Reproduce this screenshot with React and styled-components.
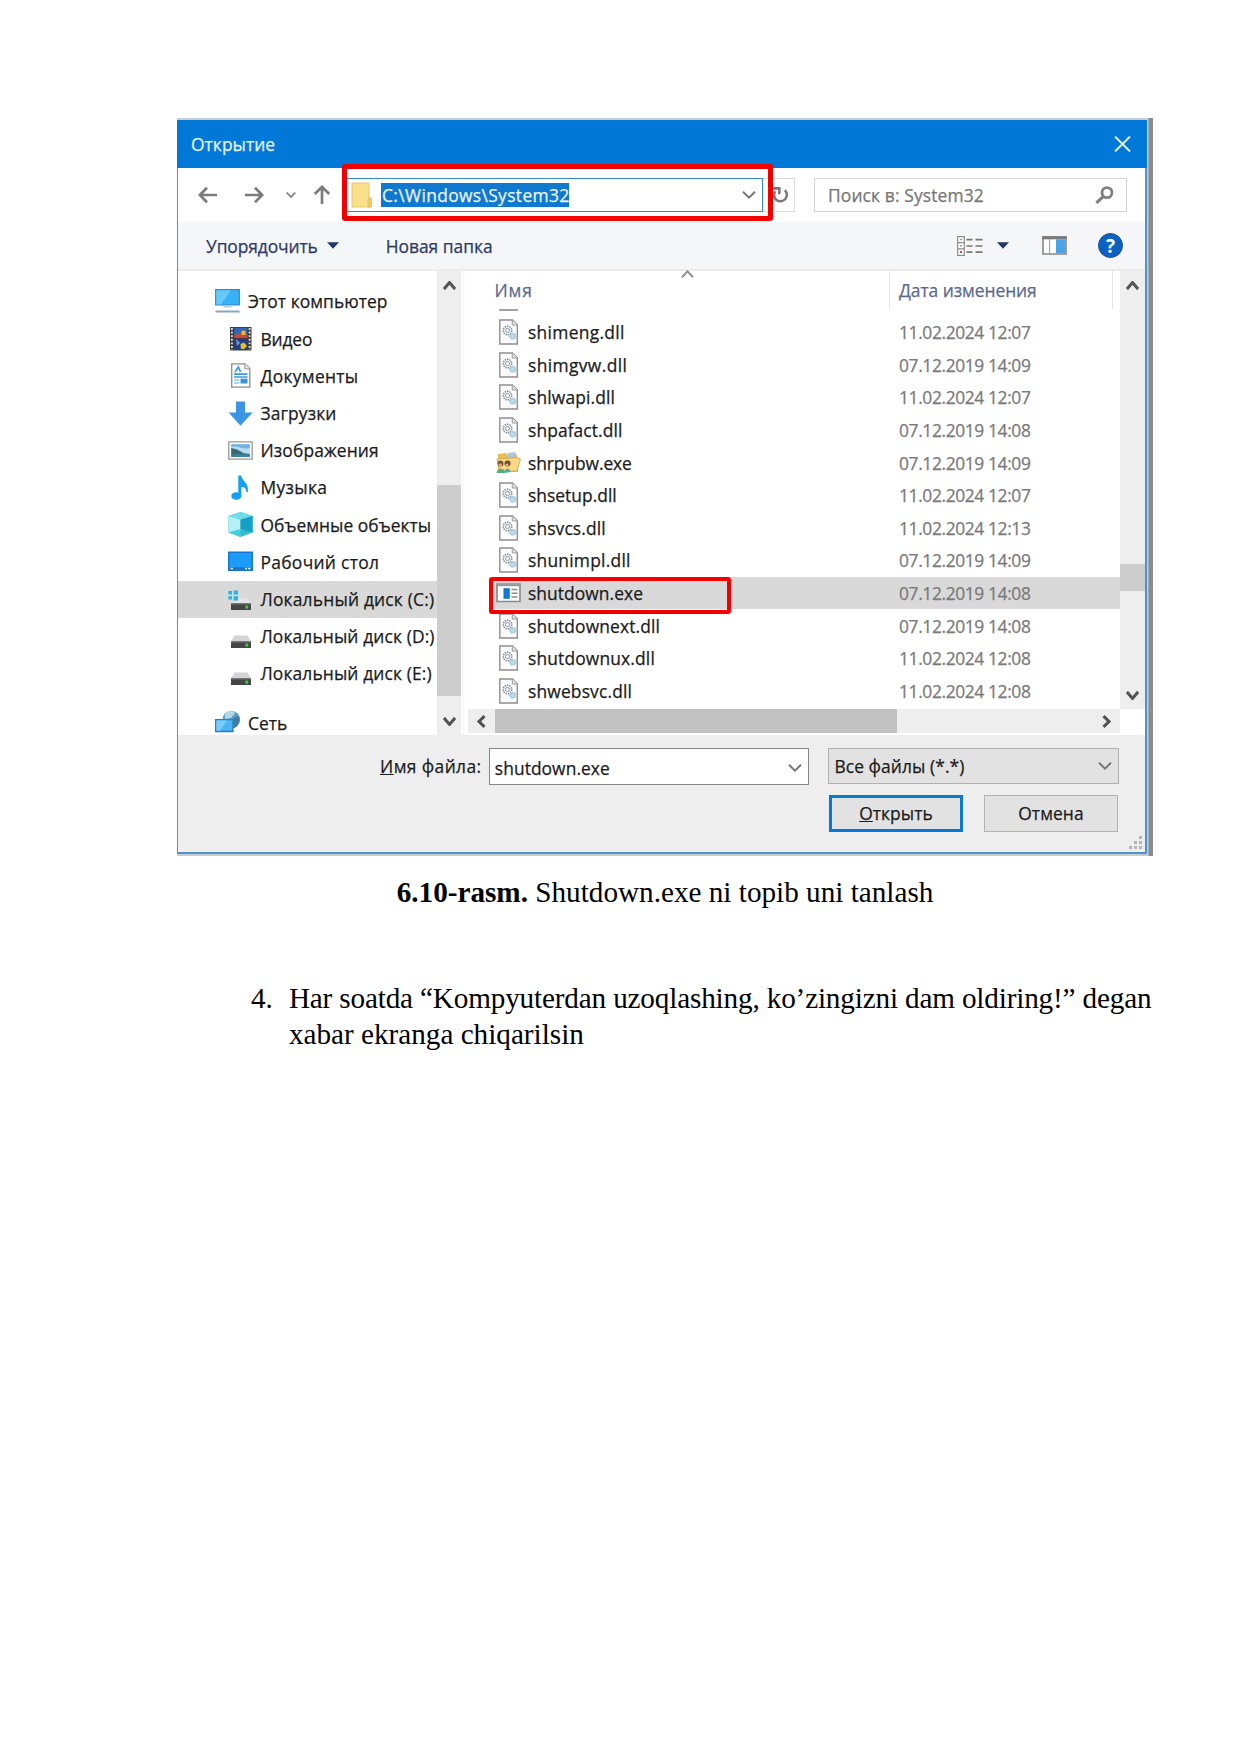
import React from "react";
import styled, { createGlobalStyle, css } from "styled-components";

const GlobalStyle = createGlobalStyle`
  *, *::before, *::after { box-sizing: border-box; }
  body { margin: 0; background: #fff; }
  svg { display: block; flex: none; }
`;

const ui = css`
  font-family: "Open Sans", "Noto Sans", sans-serif;
  font-size: 17.4px;
  line-height: 24px;
  white-space: pre;
  -webkit-text-stroke: 0.25px currentColor;
`;

const Page = styled.main`
  width: 1241px;
  height: 1755px;
  padding: 118px 0 0 177px;
  background: #fff;
`;

const Backdrop = styled.div`
  width: 976px;
  height: 738px;
  padding: 2px 6px 2px 0;
  background: linear-gradient(90deg, #c9cdd1 0, #c9cdd1 971px, #8b8b8b 972px, #8b8b8b 100%);
`;

const Dialog = styled.section`
  position: relative;
  width: 970px;
  height: 734px;
  display: flex;
  flex-direction: column;
  border: solid #4a95cf;
  border-width: 0 2px 2px 1px;
  background: #fff;
`;

const Label = styled.span`
  ${ui}
  color: ${(p) => p.$color || "#1b1b1b"};
  letter-spacing: ${(p) => p.$ls ?? 0.15}px;
`;

const TitleBar = styled.header`
  height: 48px;
  flex: none;
  display: flex;
  align-items: center;
  justify-content: space-between;
  margin: 0 -2px 0 -1px;
  padding: 0 16px 1px 14px;
  background: #0078d7;
`;

const AddressBar = styled.div`
  height: 54px;
  flex: none;
  display: flex;
  align-items: center;
  padding-left: 20px;
`;

const NavButtons = styled.div`
  width: 147px;
  display: flex;
  align-items: center;
`;

const PathField = styled.div`
  width: 418px;
  height: 34px;
  display: flex;
  align-items: center;
  padding: 0 6px 0 5px;
  border: 1.5px solid #3488cc;
  background: #fff;
`;

const Selection = styled.div`
  height: 24px;
  margin: 0 auto 0 9px;
  padding-left: 1px;
  background: #0f78cf;
  display: flex;
  align-items: center;
  width: 188px;
`;

const RefreshBox = styled.div`
  width: 32px;
  height: 34px;
  display: flex;
  align-items: center;
  padding-left: 9px;
  border: 1px solid #d9d9d9;
  border-left: 0;
`;

const SearchField = styled.div`
  width: 313px;
  height: 34px;
  margin-left: 19px;
  display: flex;
  align-items: center;
  justify-content: space-between;
  padding: 0 12px 1px 13px;
  border: 1.5px solid #d4d4d4;
`;

const Toolbar = styled.div`
  height: 49px;
  flex: none;
  display: flex;
  align-items: center;
  padding: 0 22px 0 28px;
  background: #f5f6f7;
  border-bottom: 2px solid #ebebec;
`;

const ToolButton = styled.div`
  display: flex;
  align-items: center;
  gap: ${(p) => p.$gap || 0}px;
  margin-left: ${(p) => p.$ml || 0}px;
`;

const Spacer = styled.div`
  flex: 1;
`;

const Body = styled.div`
  height: 464px;
  flex: none;
  display: flex;
`;

const Tree = styled.nav`
  width: 259px;
  flex: none;
  padding-top: 12.4px;
  overflow: hidden;
`;

const TreeRow = styled.div`
  height: 37.2px;
  display: flex;
  align-items: center;
  padding-left: ${(p) => (p.$root ? 37 : 50)}px;
  padding-bottom: 1px;
  gap: ${(p) => (p.$root ? 8 : 7.5)}px;
  margin-top: ${(p) => p.$mt || 0}px;
  background: ${(p) => (p.$active ? "#d9d9d9" : "transparent")};
`;

const VScroll = styled.div`
  width: ${(p) => p.$w}px;
  height: ${(p) => p.$h}px;
  flex: none;
  display: flex;
  flex-direction: column;
  align-items: stretch;
  background: #eee;
`;

const ScrollEnd = styled.div`
  height: ${(p) => p.$h}px;
  display: flex;
  justify-content: center;
  padding-top: ${(p) => p.$pt}px;
`;

const Thumb = styled.div`
  height: ${(p) => p.$h}px;
  background: #cdcdcd;
`;

const Splitter = styled.div`
  width: 7px;
  flex: none;
  background: linear-gradient(90deg, #fff 0 1px, #f6f6f6 2px, #fff 4px);
`;

const Files = styled.div`
  width: 652px;
  flex: none;
  display: flex;
  flex-direction: column;
`;

const ListHead = styled.div`
  height: 38px;
  flex: none;
  display: flex;
  padding-left: 26.5px;
`;

const HeadCell = styled.div`
  width: ${(p) => p.$w}px;
  display: flex;
  justify-content: space-between;
  padding: ${(p) => p.$pad};
  border-right: 1px solid #e3e3e3;
`;

const SortMark = styled.div`
  margin-top: -8px;
`;

const ClippedRow = styled.div`
  height: 7px;
  flex: none;
  padding: 0 0 0 31px;
  &::before {
    content: "";
    display: block;
    width: 19px;
    height: 2px;
    background: #a2a2a2;
  }
`;

const FileRow = styled.div`
  position: relative;
  height: 32.6px;
  flex: none;
  display: flex;
  align-items: center;
  margin-left: 23px;
  padding-left: 5px;
  background: ${(p) => (p.$active ? "#d9d9d9" : "transparent")};
`;

const FileName = styled.div`
  width: 403px;
  display: flex;
  align-items: center;
  gap: 7px;
`;

const HScroll = styled.div`
  height: 24px;
  flex: none;
  margin-top: auto;
  margin-bottom: 2px;
  display: flex;
  align-items: center;
  justify-content: space-between;
  padding: 0 8px;
  background: #eee;
`;

const HThumb = styled.div`
  width: 402px;
  height: 24px;
  margin: 0 auto 0 8.5px;
  background: #c1c1c1;
`;

const Highlight = styled.div`
  position: absolute;
  left: ${(p) => p.$x}px;
  top: ${(p) => p.$y}px;
  width: ${(p) => p.$w}px;
  height: ${(p) => p.$h}px;
  border: ${(p) => p.$b}px solid #f00000;
  border-radius: 3px;
  z-index: 2;
`;

const Footer = styled.footer`
  flex: 1;
  display: flex;
  flex-direction: column;
  gap: 10px;
  padding: 13px 26px 0 202px;
  background: #eee;
`;

const FooterRow = styled.div`
  display: flex;
  height: 37px;
  justify-content: ${(p) => (p.$end ? "flex-end" : "flex-start")};
`;

const FieldLabel = styled.div`
  width: 109px;
  padding-top: 6px;
`;

const NameInput = styled.div`
  width: 321px;
  height: 37px;
  display: flex;
  align-items: center;
  justify-content: space-between;
  padding: 3px 6px 0 5px;
  border: 1.5px solid #858585;
  background: #fff;
`;

const TypeSelect = styled.div`
  width: 291px;
  height: 36px;
  margin-left: 19px;
  display: flex;
  align-items: center;
  justify-content: space-between;
  padding: 0 6px 0 5px;
  border: 1.5px solid #b0b0b0;
  background: #e2e2e2;
`;

const Button = styled.button`
  width: 134px;
  height: 37px;
  margin: 0 1px 0 20px;
  padding: 0 0 2px;
  border: ${(p) => (p.$primary ? "3px solid #0a78d2" : "1.5px solid #b2b2b2")};
  background: #e2e2e2;
`;

const Grip = styled.div`
  position: absolute;
  right: 3px;
  bottom: 3px;
`;

const Caption = styled.p`
  width: 976px;
  margin: 18px 0 0;
  text-align: center;
  font: 29.2px/36px "Liberation Serif", serif;
  color: #000;
`;

const Steps = styled.div`
  display: flex;
  margin: 70px 0 0 74px;
  gap: 16px;
  font: 29.2px/36px "Liberation Serif", serif;
  color: #000;
`;

const StepText = styled.div`
  display: flex;
  flex-direction: column;
  white-space: pre;
`;

const StepLine = styled.span`
  letter-spacing: ${(p) => p.$ls}px;
`;

const Chevron = ({ w = 14, h = 8, color = "#777", sw = 2, up }) => (
  <svg width={w} height={h} viewBox="0 0 14 8" fill="none" stroke={color} strokeWidth={sw} preserveAspectRatio="none">
    <path d={up ? "M1 7.2L7 1.4L13 7.2" : "M1 .8L7 6.6L13 .8"} />
  </svg>
);

const SideChevron = ({ left }) => (
  <svg width="10" height="13" viewBox="0 0 10 13" fill="none" stroke="#505050" strokeWidth="3">
    <path d={left ? "M8.5 1.2L3 6.5L8.5 11.8" : "M1.5 1.2L7 6.5L1.5 11.8"} />
  </svg>
);

const Triangle = () => (
  <svg width="12" height="7" viewBox="0 0 12 7"><path d="M0 .3H12L6 6.8z" fill="#1f3864" /></svg>
);

const ArrowIcon = ({ dir }) => {
  const turn = { left: 0, up: 90, right: 180 }[dir];
  return (
    <svg width="20" height="20" viewBox="0 0 20 20" fill="none" stroke="#7b7b7b" strokeWidth="2.7">
      <path transform={`rotate(${turn} 10 10)`} d="M19 10H2M9 2.8L1.9 10L9 17.2" />
    </svg>
  );
};

const FolderIcon = () => (
  <svg width="21" height="26" viewBox="0 0 21 26">
    <path d="M1 1H18V15L20 17V25H1z" fill="#fbe08a" stroke="#e8c766" />
    <path d="M17 25V17L18.5 15L20.3 17V25z" fill="#f2cc63" stroke="#dcb65a" strokeWidth=".7" />
  </svg>
);

const RefreshIcon = () => (
  <svg width="17" height="18" viewBox="0 0 17 18" fill="none" stroke="#797979" strokeWidth="2.6">
    <path d="M12.8 4.2A6.4 6.4 0 1 1 3.2 5.2" />
    <path d="M1 2.4H7.3V8.2" />
  </svg>
);

const SearchIcon = () => (
  <svg width="19" height="18" viewBox="0 0 19 18" fill="none" stroke="#7f7f7f">
    <circle cx="12" cy="6.6" r="5" strokeWidth="2.8" />
    <path d="M8.4 10.3L1.4 17" strokeWidth="3.2" />
  </svg>
);

const CloseIcon = () => (
  <svg width="17" height="16" viewBox="0 0 17 16" stroke="#e8f3fc" strokeWidth="2"><path d="M1 .6L16 15.4M16 .6L1 15.4" /></svg>
);

const ViewIcon = () => (
  <svg width="26" height="20" viewBox="0 0 26 20" fill="none" stroke="#8c8c8c" strokeWidth="1.2">
    <path d="M.7 .7H7.3V19.3H.7zM.7 6.7H7.3M.7 12.8H7.3" fill="#fff" />
    <path d="M3 3.7H5M3 9.8H5" stroke="#7891ae" />
    <path d="M3 16H5" stroke="#d04a3a" strokeWidth="2" />
    <path d="M9.5 3.7H15.5M18.5 3.7H25.5M9.5 10H15.5M18.5 10H25.5M9.5 16.2H15.5M18.5 16.2H25.5" stroke="#777" strokeWidth="1.7" />
  </svg>
);

const PaneIcon = () => (
  <svg width="25" height="19" viewBox="0 0 25 19">
    <path d="M1 1H24V18H1z" fill="#fff" stroke="#858585" strokeWidth="1.6" />
    <path d="M.2 .2H24.8V3.3H.2z" fill="#7b7b7b" />
    <path d="M7.6 3V18" stroke="#999" />
    <path d="M14 3.3H23.2V17.2H14z" fill="#4aa3e6" />
  </svg>
);

const HelpBadge = styled.div`
  width: 25px;
  height: 25px;
  margin-left: 31px;
  border-radius: 50%;
  border: 1.5px solid #1c4f8c;
  background: #0b62c4;
  color: #fff;
  display: flex;
  align-items: center;
  justify-content: center;
  font: bold 19px/22px "Open Sans", sans-serif;
`;

const icons = {
  computer: (
    <>
      <path d="M.7 .7H24.3V16H.7z" fill="#35b2f8" stroke="#3a86b8" strokeWidth="1.2" />
      <path d="M1.3 1.3H16L6 15.4H1.3z" fill="#67c8fb" />
      <path d="M9.5 16.5H15.5L17 18.6H8z" fill="#b9cbd8" />
      <path d="M.5 22.5H24.5" stroke="#87a5bd" strokeWidth="2" />
    </>
  ),
  video: (
    <>
      <path d="M2 1H23.5V24.5H2z" fill="#3c3c3c" />
      <path d="M3.9 2V24M21.6 2V24" stroke="#dcdcdc" strokeWidth="1.9" strokeDasharray="1.9 1.7" />
      <path d="M6.2 1.8H19.4V12H6.2z" fill="#3565b8" />
      <path d="M6.2 13H19.4V23.8H6.2z" fill="#243f86" />
      <path d="M6.2 9L12 7L17 9.5L19.4 8.6V12H6.2z" fill="#bf4d3f" />
      <path d="M13.5 4.8H17.5V9H13.5zM12.5 18L16 16.6L19 20L16 23H13z" fill="#edbd2c" />
      <path d="M8 13L12 17L9 20z" fill="#6f99d8" />
    </>
  ),
  docs: (
    <>
      <path d="M3.7 .8H17L21.8 5.6V24.2H3.7z" fill="#fcfcfc" stroke="#8e8e8e" strokeWidth="1.3" />
      <path d="M16.8 .8V5.8H21.8" fill="#e6e6e6" stroke="#9a9a9a" />
      <path d="M7 9L10.4 4L12.5 9M6 11.2H19.5M6 14H19.5" fill="none" stroke="#3b9bdc" strokeWidth="1.7" />
      <path d="M6 17H11M6 20H11" stroke="#5ca9db" strokeWidth="1.2" />
      <path d="M12.5 15.7H19.5V20.5H12.5z" fill="#4191d0" />
    </>
  ),
  download: <path d="M8 .5H17V11.5H24.6L12.5 24.8L.6 11.5H8z" fill="#3a95e4" />,
  images: (
    <>
      <path d="M.8 3.8H24.2V21.2H.8z" fill="#fff" stroke="#999" strokeWidth="1.3" />
      <path d="M3.2 6.2H21.8V18.8H3.2z" fill="#b5dcf6" />
      <path d="M3.2 6.2H21.8V10C15 12 9 7 3.2 9z" fill="#6fb2e6" />
      <path d="M3.2 10L9 11.5L16 15.2L21.8 16V18.8H3.2z" fill="#3a6b70" />
      <path d="M3.2 16.5H21.8V18.8H3.2z" fill="#3882b0" />
    </>
  ),
  music: (
    <>
      <ellipse cx="8.3" cy="21" rx="5" ry="3.8" fill="#12a0f4" />
      <path d="M10.3 21V.5H13.3C13.8 6 21.5 8 19.8 17H18.3C18.5 13 16 12 13.3 12V21z" fill="#12a0f4" />
    </>
  ),
  cube: (
    <>
      <path d="M12.5 0L24.6 4V20.5L12.5 25L.5 20.5V4z" fill="#30bdd2" />
      <path d="M.5 4L12.5 0L24.6 4L12.5 7.8z" fill="#6fdcea" />
      <path d="M.5 4L12.5 7.8V18L.5 20.5z" fill="#b5f0f5" />
      <path d="M12.5 7.8L24.6 4V20.5L12.5 17z" fill="#14a0c4" />
      <path d="M.5 20.5L12.5 17V25z" fill="#45cfdc" />
    </>
  ),
  desktop: (
    <>
      <path d="M.7 3.2H24.3V21.3H.7z" fill="#1d9bfb" stroke="#1877c8" strokeWidth="1.4" />
      <path d="M1.4 18.3H23.6V20.6H1.4z" fill="#1673c5" />
      <path d="M2.5 19.5H5M17 19.5H19M20 19.5H22.5" stroke="#d4efff" strokeWidth="1.6" />
    </>
  ),
  disk: (
    <>
      <path d="M6.5 11.5H19.5L23 17.5H3z" fill="#d4d4d6" />
      <path d="M3 17H23V24H3z" fill="#454547" />
      <path d="M3 17H23V18.5H3z" fill="#77777a" />
      <path d="M17.4 19.6H20.2V22.6H17.4z" fill="#3bd13b" />
    </>
  ),
  system: (
    <>
      <path d="M8 12.5H20L23 17.5H3z" fill="#e2e4e6" />
      <path d="M3 17H23V24H3z" fill="#454547" />
      <path d="M3 17H23V18.5H3z" fill="#77777a" />
      <path d="M17.4 19.6H20.2V22.6H17.4z" fill="#3bd13b" />
      <path d="M.4 5H4V8.6H.4zM5.6 4.4H10V8.6H5.6zM.4 10.2H4V13.6H.4zM5.6 10.2H10V14.4H5.6z" fill="#25b4ea" />
    </>
  ),
  network: (
    <>
      <circle cx="16.3" cy="9.5" r="8.7" fill="#5c9fc4" />
      <path d="M10 4C13 .5 18 0 20 3L16 8L10 9z" fill="#b4d7e8" />
      <path d="M18 8L24 6C26 12 23 16 19 18z" fill="#3d7ba4" />
      <path d="M.7 9.7H18V21.5H.7z" fill="#4db5f5" stroke="#2e7db5" strokeWidth="1.3" />
      <path d="M1.4 10.4H12L5 20.8H1.4z" fill="#79cdfb" />
    </>
  ),
};

const TreeIcon = ({ name }) => (
  <svg width="25" height="25" viewBox="0 0 25 25">{icons[name]}</svg>
);

const DllIcon = () => (
  <svg width="25" height="26" viewBox="0 0 25 26">
    <path d="M3.8 1H16.5L21.3 5.8V25H3.8z" fill="#fbfbfb" stroke="#8f8f8f" strokeWidth="1.4" />
    <path d="M16.3 1V6H21.3" fill="#e5e5e5" stroke="#9c9c9c" />
    <circle cx="11.5" cy="11.5" r="4.3" fill="#eef1f4" stroke="#7f8b96" strokeWidth="1.5" strokeDasharray="1.5 .9" />
    <circle cx="11.5" cy="11.5" r="2" fill="#fff" stroke="#8c98a4" />
    <circle cx="16.8" cy="17.3" r="2.6" fill="#c0dcec" stroke="#a9cde0" strokeWidth="1.4" />
    <path d="M12.5 16L16.5 20.5" stroke="#b3d2e2" strokeWidth="1.6" />
  </svg>
);

const ShareIcon = () => (
  <svg width="25" height="24" viewBox="0 0 25 24">
    <path d="M2 3L10 2L12 4L20 2L22 7V21L2 21z" fill="#e9bf55" />
    <path d="M12 2L19 1V6H12z" fill="#a9c9dc" />
    <path d="M1 8L20 6.5L24.5 8L21 20L4 21z" fill="#f7da83" stroke="#cfa245" strokeWidth=".8" />
    <circle cx="4.5" cy="12.5" r="3" fill="#7c5638" />
    <circle cx="11.5" cy="12.5" r="3" fill="#6d4c38" />
    <circle cx="4.2" cy="14" r="1.6" fill="#e3b084" />
    <circle cx="11" cy="14" r="1.6" fill="#e3b084" />
    <path d="M.5 22C1 17 9 16 9 22z" fill="#4fb477" />
    <path d="M8 22C8.5 17 14 16 14.5 21z" fill="#47b3a2" />
  </svg>
);

const ExeIcon = () => (
  <svg width="25" height="20" viewBox="0 0 25 20">
    <path d="M1 1H24V18.5H1z" fill="#fbfbfb" stroke="#8d8d8d" strokeWidth="1.7" />
    <path d="M.5 1.2H24.5V3.2H.5z" fill="#9a9a9a" />
    <path d="M7.5 5.2H13.8V15.8H7.5z" fill="#0f78d4" />
    <path d="M15.5 6.5H21.5M15.5 10.2H21.5M15.5 14H21.5" stroke="#8e8e8e" strokeWidth="1.4" />
  </svg>
);

const tree = [
  { icon: "computer", text: "Этот компьютер", ls: 0.07, root: true },
  { icon: "video", text: "Видео", ls: -0.15 },
  { icon: "docs", text: "Документы", ls: 0.32 },
  { icon: "download", text: "Загрузки", ls: 0.1 },
  { icon: "images", text: "Изображения", ls: 0.12 },
  { icon: "music", text: "Музыка", ls: 0.34 },
  { icon: "cube", text: "Объемные объекты", ls: 0.04 },
  { icon: "desktop", text: "Рабочий стол", ls: 0.3 },
  { icon: "system", text: "Локальный диск (C:)", ls: 0.19, active: true },
  { icon: "disk", text: "Локальный диск (D:)", ls: 0.12 },
  { icon: "disk", text: "Локальный диск (E:)", ls: 0.12 },
  { icon: "network", text: "Сеть", ls: 0, root: true, mt: 12 },
];

const files = [
  { name: "shimeng.dll", date: "11.02.2024 12:07", ls: 0.3 },
  { name: "shimgvw.dll", date: "07.12.2019 14:09", ls: 0.38 },
  { name: "shlwapi.dll", date: "11.02.2024 12:07", ls: 0.15 },
  { name: "shpafact.dll", date: "07.12.2019 14:08", ls: 0.1 },
  { name: "shrpubw.exe", date: "07.12.2019 14:09", ls: -0.08, Icon: ShareIcon },
  { name: "shsetup.dll", date: "11.02.2024 12:07", ls: 0.02 },
  { name: "shsvcs.dll", date: "11.02.2024 12:13", ls: 0.12 },
  { name: "shunimpl.dll", date: "07.12.2019 14:09", ls: 0.24 },
  { name: "shutdown.exe", date: "07.12.2019 14:08", ls: 0.06, Icon: ExeIcon, active: true },
  { name: "shutdownext.dll", date: "07.12.2019 14:08", ls: 0.12 },
  { name: "shutdownux.dll", date: "11.02.2024 12:08", ls: 0.15 },
  { name: "shwebsvc.dll", date: "11.02.2024 12:08", ls: 0.16 },
];

const NavSlot = styled.div`
  width: ${(p) => p.$w}px;
`;

export default function App() {
  return (
    <Page>
      <GlobalStyle />
      <Backdrop>
        <Dialog>
          <TitleBar>
            <Label $color="#e6f2fc" $ls={0.06}>Открытие</Label>
            <CloseIcon />
          </TitleBar>

          <AddressBar>
            <NavButtons>
              <NavSlot $w={46}><ArrowIcon dir="left" /></NavSlot>
              <NavSlot $w={42}><ArrowIcon dir="right" /></NavSlot>
              <NavSlot $w={26}><Chevron w={10} h={6} sw={2.6} color="#8a8a8a" /></NavSlot>
              <ArrowIcon dir="up" />
            </NavButtons>
            <PathField>
              <FolderIcon />
              <Selection><Label $color="#e9f4fd" $ls={0.36}>C:\Windows\System32</Label></Selection>
              <Chevron color="#777" />
            </PathField>
            <RefreshBox><RefreshIcon /></RefreshBox>
            <SearchField>
              <Label $color="#767676" $ls={0.13}>Поиск в: System32</Label>
              <SearchIcon />
            </SearchField>
          </AddressBar>

          <Toolbar>
            <ToolButton $gap={9}>
              <Label $color="#2b3a66" $ls={-0.1}>Упорядочить</Label>
              <Triangle />
            </ToolButton>
            <ToolButton $ml={47}>
              <Label $color="#2b3a66" $ls={0}>Новая папка</Label>
            </ToolButton>
            <Spacer />
            <ToolButton $gap={14}>
              <ViewIcon />
              <Triangle />
            </ToolButton>
            <ToolButton $ml={33}><PaneIcon /></ToolButton>
            <HelpBadge>?</HelpBadge>
          </Toolbar>

          <Body>
            <Tree>
              {tree.map((n) => (
                <TreeRow key={n.text} $root={n.root} $active={n.active} $mt={n.mt}>
                  <TreeIcon name={n.icon} />
                  <Label $ls={n.ls}>{n.text}</Label>
                </TreeRow>
              ))}
            </Tree>
            <VScroll $w={24} $h={464}>
              <ScrollEnd $h={213.5} $pt={10}><Chevron up w={13} h={9} sw={3} color="#555" /></ScrollEnd>
              <Thumb $h={211} />
              <ScrollEnd $h={39} $pt={21}><Chevron w={13} h={9} sw={3} color="#555" /></ScrollEnd>
            </VScroll>
            <Splitter />

            <Files>
              <ListHead>
                <HeadCell $w={395.5} $pad="7px 195px 0 0">
                  <Label $color="#5a6a8c" $ls={0.9}>Имя</Label>
                  <SortMark><Chevron up w={13} h={8} color="#8a8a8a" /></SortMark>
                </HeadCell>
                <HeadCell $w={223} $pad="7px 0 0 9px">
                  <Label $color="#5a6a8c" $ls={-0.05}>Дата изменения</Label>
                </HeadCell>
              </ListHead>
              <ClippedRow />
              {files.map(({ name, date, ls, active, Icon = DllIcon }) => (
                <FileRow key={name} $active={active}>
                  <FileName>
                    <Icon />
                    <Label $ls={ls}>{name}</Label>
                  </FileName>
                  <Label $color="#7a7a7a" $ls={-0.38}>{date}</Label>
                  {active && <Highlight $x={-2} $y={0} $w={242} $h={37} $b={4.4} />}
                </FileRow>
              ))}
              <HScroll>
                <SideChevron left />
                <HThumb />
                <SideChevron />
              </HScroll>
            </Files>
            <VScroll $w={25} $h={438}>
              <ScrollEnd $h={292.5} $pt={10}><Chevron up w={13} h={9} sw={3} color="#555" /></ScrollEnd>
              <Thumb $h={27} />
              <ScrollEnd $h={118} $pt={100}><Chevron w={13} h={9} sw={3} color="#555" /></ScrollEnd>
            </VScroll>
          </Body>

          <Footer>
            <FooterRow>
              <FieldLabel><Label $ls={0.4}><u>И</u>мя файла:</Label></FieldLabel>
              <NameInput>
                <Label $ls={0.06}>shutdown.exe</Label>
                <Chevron color="#777" />
              </NameInput>
              <TypeSelect>
                <Label $ls={0.08}>Все файлы (*.*)</Label>
                <Chevron color="#777" />
              </TypeSelect>
            </FooterRow>
            <FooterRow $end>
              <Button $primary><Label $ls={0.06}><u>О</u>ткрыть</Label></Button>
              <Button><Label $ls={0.1}>Отмена</Label></Button>
            </FooterRow>
          </Footer>

          <Grip>
            <svg width="13" height="13" viewBox="0 0 13 13" fill="#b4b4b4">
              <path d="M10 0h3v3h-3zM5 5h3v3h-3zM10 5h3v3h-3zM0 10h3v3h-3zM5 10h3v3h-3zM10 10h3v3h-3z" />
            </svg>
          </Grip>
          <Highlight $x={163.5} $y={44} $w={431} $h={57} $b={5} />
        </Dialog>
      </Backdrop>

      <Caption><b>6.10-rasm.</b> Shutdown.exe ni topib uni tanlash</Caption>

      <Steps>
        <span>4.</span>
        <StepText>
          <StepLine $ls={-0.16}>Har soatda “Kompyuterdan uzoqlashing, ko’zingizni dam oldiring!” degan</StepLine>
          <StepLine $ls={0}>xabar ekranga chiqarilsin</StepLine>
        </StepText>
      </Steps>
    </Page>
  );
}
